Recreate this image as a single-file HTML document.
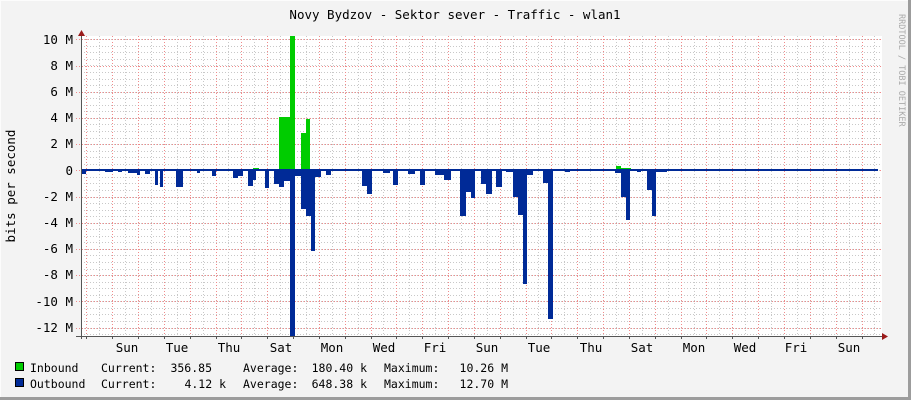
<!DOCTYPE html>
<html><head><meta charset="utf-8"><style>
html,body{margin:0;padding:0}
body{width:911px;height:400px;background:#f3f3f3;position:relative;overflow:hidden;font-family:"DejaVu Sans Mono","Liberation Mono",monospace;color:#000}
svg{position:absolute;left:0;top:0}
</style></head><body>
<svg width="911" height="400" xmlns="http://www.w3.org/2000/svg" font-family="DejaVu Sans Mono, Liberation Mono, monospace">
<rect x="0" y="0" width="911" height="400" fill="#f3f3f3"/>
<line x1="0" y1="0.5" x2="911" y2="0.5" stroke="#fcfcfc"/>
<line x1="0.5" y1="0" x2="0.5" y2="400" stroke="#fcfcfc"/>
<line x1="0" y1="398.5" x2="911" y2="398.5" stroke="#9c9c9c" stroke-width="3"/>
<line x1="909.5" y1="0" x2="909.5" y2="400" stroke="#9c9c9c" stroke-width="3"/>
<rect x="81" y="36" width="801" height="300" fill="#ffffff"/>
<g id="grid" stroke-width="1" stroke-dasharray="1,2"></g>
<g id="data"></g>
<text x="455" y="19" font-size="12.5" text-anchor="middle">Novy Bydzov - Sektor sever - Traffic - wlan1</text>
<text transform="translate(15,186) rotate(-90)" font-size="12.5" text-anchor="middle">bits per second</text>
<text transform="translate(899,14) rotate(90)" font-size="8.5" fill="#aaaaaa">RRDTOOL / TOBI OETIKER</text>
<g font-size="12.5" text-anchor="end">
<text x="73" y="44">10 M</text><text x="73" y="70">8 M</text><text x="73" y="96">6 M</text><text x="73" y="122">4 M</text><text x="73" y="148">2 M</text><text x="73" y="175">0</text><text x="73" y="201">-2 M</text><text x="73" y="227">-4 M</text><text x="73" y="253">-6 M</text><text x="73" y="279">-8 M</text><text x="73" y="306">-10 M</text><text x="73" y="332">-12 M</text>
</g>
<g font-size="12.5" text-anchor="middle">
<text x="127" y="352">Sun</text><text x="177" y="352">Tue</text><text x="229" y="352">Thu</text><text x="281" y="352">Sat</text><text x="332" y="352">Mon</text><text x="384" y="352">Wed</text><text x="435" y="352">Fri</text><text x="487" y="352">Sun</text><text x="539" y="352">Tue</text><text x="591" y="352">Thu</text><text x="642" y="352">Sat</text><text x="694" y="352">Mon</text><text x="745" y="352">Wed</text><text x="796" y="352">Fri</text><text x="849" y="352">Sun</text>
</g>
<rect x="15.5" y="362.5" width="8" height="8" fill="#00cc00" stroke="#000"/>
<rect x="15.5" y="378.5" width="8" height="8" fill="#002a97" stroke="#000"/>
<g font-size="11.5" xml:space="preserve">
<text x="30" y="372">Inbound</text><text x="101" y="372">Current:</text><text x="212" y="372" text-anchor="end">356.85</text><text x="243" y="372">Average:</text><text x="367" y="372" text-anchor="end">180.40 k</text><text x="384" y="372">Maximum:</text><text x="508" y="372" text-anchor="end">10.26 M</text>
<text x="30" y="388">Outbound</text><text x="101" y="388">Current:</text><text x="226" y="388" text-anchor="end">4.12 k</text><text x="243" y="388">Average:</text><text x="367" y="388" text-anchor="end">648.38 k</text><text x="384" y="388">Maximum:</text><text x="508" y="388" text-anchor="end">12.70 M</text>
</g>
<g id="axes"></g>
</svg>
<script>
var ns="http://www.w3.org/2000/svg";
function el(p,n,a){var e=document.createElementNS(ns,n);for(var k in a)e.setAttribute(k,a[k]);p.appendChild(e);return e;}
var g=document.getElementById('grid');
for(var y=39.3;y<336;y+=6.55){el(g,'line',{x1:81,x2:882,y1:Math.round(y)+.5,y2:Math.round(y)+.5,stroke:'#c8c8c8'});}
for(var x=99.2;x<882;x+=25.84){el(g,'line',{x1:Math.round(x)+.5,x2:Math.round(x)+.5,y1:36,y2:336,stroke:'#c8c8c8'});}
for(var i=0;i<12;i++){var yy=39.3+26.2*i;el(g,'line',{x1:76,x2:882,y1:Math.round(yy)+.5,y2:Math.round(yy)+.5,stroke:'#f08a8a'});}
for(var x=86.3;x<882;x+=25.84){el(g,'line',{x1:Math.round(x)+.5,x2:Math.round(x)+.5,y1:36,y2:339,stroke:'#f08a8a'});}
var d=document.getElementById('data');
var blue=[[82,86,174],[105,113,172],[118,122,172],[128,137,173],[137,140,175],[145,150,174],[155,158,185],[160,163,187],[176,183,187],[197,200,173],[212,216,176],[233,238,178],[238,243,176],[248,253,186],[253,256,180],[265,269,188],[274,279,184],[279,284,187],[284,290,181],[290,295,336],[295,301,176],[301,306,209],[306,311,216],[311,315,251],[315,321,177],[326,331,175],
[362,367,186],[367,372,194],[383,390,173],[393,398,185],[408,415,174],[420,425,185],[435,445,175],[445,451,180],[444,450,180],[460,466,216],[466,471,192],[471,475,198],[481,486,184],[486,492,194],[496,502,187],[506,513,172],[513,518,197],[518,523,215],[523,527,284],[527,533,175],[543,548,183],[548,553,319],[565,570,172],
[615,621,173],[621,626,197],[626,630,220],[637,641,172],[647,652,190],[652,656,216],[656,667,172]];
blue.forEach(function(b){el(d,'rect',{x:b[0],y:170,width:b[1]-b[0],height:b[2]-170,fill:'#002a97'});});
var green=[[253,259,168],[279,290,117],[290,295,36],[301,306,133],[306,310,119],[616,621,166],[621,631,168],[723,727,169],[743,747,169],[795,799,169],[847,851,169]];
green.forEach(function(b){el(d,'rect',{x:b[0],y:b[2],width:b[1]-b[0],height:170-b[2],fill:'#00cc00'});});
el(d,'rect',{x:81,y:169,width:797,height:2,fill:'#002a97'});
var a=document.getElementById('axes');
el(a,'line',{x1:81.5,x2:81.5,y1:32,y2:339,stroke:'#555'});
el(a,'line',{x1:76,x2:884,y1:336.5,y2:336.5,stroke:'#555'});
el(a,'path',{d:'M78 36 L81.5 30 L85 36 Z',fill:'#9b1b1b'});
el(a,'path',{d:'M882 333 L888 336.5 L882 340 Z',fill:'#9b1b1b'});
for(var x=86.3;x<882;x+=25.84){el(a,'line',{x1:Math.round(x)+.5,x2:Math.round(x)+.5,y1:336,y2:339,stroke:'#555'});}
</script>
</body></html>
